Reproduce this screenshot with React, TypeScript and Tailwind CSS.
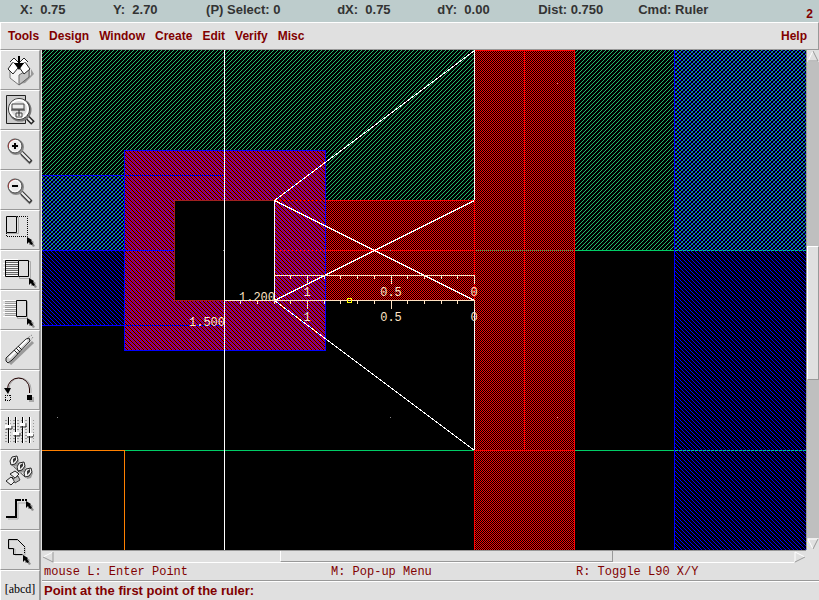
import type { ReactNode } from "react";

const readouts = ["X:  0.75", "Y:  2.70", "(P) Select: 0", "dX:  0.75", "dY:  0.00", "Dist: 0.750", "Cmd: Ruler"];

const menus = ["Tools", "Design", "Window", "Create", "Edit", "Verify", "Misc"];

const Pointer = ({ x, y }: { x: number; y: number }) => (
  <g transform={`translate(${x} ${y})`}>
    <path d="M1 1l5 3-1 1 2 3-2 1-2-3-2 1z" fill="#8c8c8c" transform="translate(1 1)" />
    <path d="M0 0l5 3-1 1 2 3-2 1-2-3-2 2z" fill="#000" />
  </g>
);

const Magnifier = ({ plus }: { plus?: boolean }) => (
  <>
    <path d="M22 24l9 9" stroke="#8c8c8c" strokeWidth="4" />
    <path d="M20 21l11 11" stroke="#333" strokeWidth="4" />
    <path d="M20 21l10 10" stroke="#eee" strokeWidth="2" />
    <circle cx="16" cy="17" r="7" fill="none" stroke="#8c8c8c" strokeWidth="2" />
    <circle cx="15" cy="16" r="7" fill="#e8e8e8" stroke="#444" />
    <path d="M9 18a6 6 0 0 1 6-8" fill="none" stroke="#a33" />
    <circle cx="15" cy="16" r="5.5" fill="none" stroke="#fff" />
    <path d={plus ? "M12 16h6M15 13v6" : "M12 16h6"} stroke="#000" strokeWidth="2" />
  </>
);

const Node = ({ x, y }: { x: number; y: number }) => (
  <g transform={`translate(${x} ${y})`}>
    <path d="M-3 1l5-4 3 3-2 5-4 1z" fill="#999" />
    <path d="M-4 0l2-4 5-1 1 4-3 4-4 1z" fill="#f4f4f4" stroke="#222" />
    <path d="M-1 2v-4l3-2v3z" fill="#333" />
  </g>
);

const tools: { label: string; icon: ReactNode }[] = [
  {
    label: "Save",
    icon: (
      <>
        <path d="M20 34l11-9v-6l3 5-9 9z" fill="#999" />
        <path d="M10 19l9-6 10 6v8l-10 8-9-7z" fill="#f2f2f2" stroke="#777" />
        <path d="M19 25l10-6v8l-10 8z" fill="#c4c4c4" stroke="#666" />
        <path d="M8 19l5-7 6 5-1 1-5 6z" fill="#fff" stroke="#222" />
        <path d="M19 17l6-5 5 7-6 5z" fill="#fff" stroke="#222" />
        <path d="M10 12l4-4 5 5M28 12l-4-4-5 5" fill="#fff" stroke="#222" />
        <path d="M19 6v11" stroke="#000" strokeWidth="2" />
        <path d="M14 13h10l-5 7z" fill="#000" />
      </>
    ),
  },
  {
    label: "Fit",
    icon: (
      <>
        <path d="M6.500 5.500h19v28h-19z" fill="#ccc" stroke="#222" />
        <path d="M25 25l8 8" stroke="#222" strokeWidth="5" />
        <path d="M25 25l7 7" stroke="#eee" strokeWidth="2" />
        <circle cx="20" cy="20" r="10.5" fill="none" stroke="#777" strokeWidth="2" />
        <circle cx="19" cy="19" r="10.5" fill="#ddd" stroke="#333" />
        <circle cx="19" cy="19" r="9" fill="none" stroke="#fff" strokeWidth="2" />
        <path d="M12 14h12v5H12zM16 23h6v4h-6z" fill="#eee" stroke="#444" />
        <path d="M11 20h14M19 20v6" stroke="#222" />
      </>
    ),
  },
  { label: "Zoom in", icon: <Magnifier plus /> },
  { label: "Zoom out", icon: <Magnifier /> },
  {
    label: "Stretch",
    icon: (
      <>
        <path d="M7.500 7.500h11v16h-11z" fill="none" stroke="#aaa" />
        <path d="M6.500 6.500h10v16h-10z" fill="#ddd" stroke="#000" />
        <path d="M17 6.500h10.500v20h-21v-4" fill="none" stroke="#000" strokeDasharray="1 1" />
        <Pointer x={27} y={27} />
      </>
    ),
  },
  {
    label: "Copy",
    icon: (
      <>
        <path d="M3 9.500h15M3 13.500h15M3 17.500h15M3 21.500h15M3 25.500h15" stroke="#fff" />
        <path d="M6 12.500h12M6 14.500h12M6 16.500h12M6 18.500h12M6 20.500h12M6 22.500h12M6 24.500h12" stroke="#666" />
        <path d="M18 10.500H5.500v16H18" fill="none" stroke="#000" />
        <path d="M19.500 11.500h11v17h-11z" fill="none" stroke="#aaa" />
        <path d="M18.500 10.500h10v16h-10z" fill="#ddd" stroke="#000" />
        <Pointer x={29} y={28} />
      </>
    ),
  },
  {
    label: "Move",
    icon: (
      <>
        <path d="M3 10.500h14M3 14.500h14M3 18.500h14M3 22.500h14M3 26.500h14" stroke="#fff" />
        <path d="M5 11.500h12M5 13.500h12M5 15.500h12M5 17.500h12M5 19.500h12M5 21.500h12M5 23.500h12M5 25.500h12" stroke="#999" />
        <path d="M17.500 11.500h10v17h-10z" fill="none" stroke="#aaa" />
        <path d="M16.500 10.500h10v16h-10z" fill="#ddd" stroke="#000" />
        <Pointer x={27} y={28} />
      </>
    ),
  },
  {
    label: "Delete",
    icon: (
      <>
        <path d="M10 34L33 12" stroke="#999" strokeWidth="3" />
        <path d="M6 28L26 9l3-1 1 3-18 19-4 3-2-2z" fill="#ccc" stroke="#222" />
        <path d="M9 28L27 10" stroke="#fff" strokeWidth="2" />
        <path d="M14 20l4 4M16 18l4 4M18 16l4 4" stroke="#222" />
        <path d="M26 9l6-4M30 11l3-4" stroke="#777" strokeDasharray="1 1" />
      </>
    ),
  },
  {
    label: "Undo",
    icon: (
      <>
        <path d="M9 19A11 11 0 0 1 31 19v4" fill="none" stroke="#aaa" />
        <path d="M7.500 19A11 11 0 0 1 29.500 19v4" fill="none" stroke="#200" />
        <path d="M4 18h7l-3 6z" fill="#000" />
        <path d="M5 25.500h6M5 30.500h6M5.500 25v6M10.500 25v6" fill="none" stroke="#000" strokeDasharray="1 1" />
        <path d="M29 27h5v5h-5z" fill="#aaa" />
        <path d="M27 25h5v5h-5z" fill="#000" />
      </>
    ),
  },
  {
    label: "Properties",
    icon: (
      <>
        <path d="M5 10.500h29M5 13.500h29M5 16.500h29M5 19.500h29M5 22.500h29M5 25.500h29M5 28.500h29M5 31.500h29" stroke="#999" strokeDasharray="2 2" />
        <path d="M8.500 7v26M15.500 7v26M22.500 7v26M29.500 7v26" stroke="#000" />
        <path d="M9.500 7v26M16.500 7v26M23.500 7v26M30.500 7v26" stroke="#fff" />
        <path d="M6 19h6v-3M14 26h6v-3M20 17h6v-3M27 27h6v-3" stroke="#333" />
        <path d="M5 15h6v3H5zM13 22h6v3h-6zM20 13h5v3h-5zM27 23h6v3h-6z" fill="#fff" />
      </>
    ),
  },
  {
    label: "Instance",
    icon: (
      <>
        <path d="M11 14l14 13M22 18L11 29" stroke="#444" />
        <Node x={14} y={11} />
        <Node x={21} y={17} />
        <Node x={28} y={23} />
        <path d="M10 24l5-3 4 3-4 4z" fill="#eee" stroke="#222" />
        <path d="M6 31l5-4 4 4-4 4z" fill="#eee" stroke="#222" />
        <path d="M13 29l5-3 2 4-5 3z" fill="#bbb" stroke="#444" />
      </>
    ),
  },
  {
    label: "Path",
    icon: (
      <>
        <path d="M8 29h10V13h8" fill="none" stroke="#aaa" />
        <path d="M6 27h10V10h3" fill="none" stroke="#000" strokeWidth="2" />
        <path d="M19 10h8" stroke="#000" strokeWidth="2" strokeDasharray="2 1" />
        <Pointer x={26} y={11} />
      </>
    ),
  },
  {
    label: "Polygon",
    icon: (
      <>
        <path d="M9 10h9l7 7v8H15v-6H9z" fill="#ddd" stroke="#aaa" />
        <path d="M24.500 16.500l-7-7h-9v9h5v6h9" fill="none" stroke="#000" />
        <path d="M24.500 16v8" stroke="#000" strokeDasharray="1 1" />
        <Pointer x={23} y={25} />
      </>
    ),
  },
];

const Ruler = ({ from, y }: { from: number; y: number }) => {
  const ticks = [];
  for (let i = 0; 474 - i * 16.7 > from; i++) ticks.push(i);
  return (
    <g fill="#ffe4c4">
      <rect x={from} y={y} width={475 - from} height="1" />
      {ticks.map((i) => (
        <rect key={i} x={Math.round(474 - i * 16.7)} y={y} width="1" height={i % 5 ? 4 : 9} />
      ))}
      <g className="font-['Liberation_Mono',monospace] text-[12px] font-normal" textAnchor="middle">
        <text x="307" y={y + 21}>1</text>
        <text x="391" y={y + 21}>0.5</text>
        <text x="474" y={y + 21}>0</text>
      </g>
    </g>
  );
};

const LayoutCanvas = () => (
  <svg className="block h-full w-full bg-black" shapeRendering="crispEdges" role="img" aria-label="Cell layout">
    <defs>
      <pattern id="green" width="4" height="4" patternUnits="userSpaceOnUse">
        <path d="M3 0h1v1h-1zM2 1h1v1h-1zM1 2h1v1h-1zM0 3h1v1h-1z" fill="#23b96c" />
      </pattern>
      <pattern id="blue" width="4" height="4" patternUnits="userSpaceOnUse">
        <path d="M0 0h1v1h-1zM1 1h1v1h-1zM2 2h1v1h-1zM3 3h1v1h-1z" fill="#00f" />
      </pattern>
      <pattern id="red" width="2" height="2" patternUnits="userSpaceOnUse">
        <path d="M1 0h1v1h-1zM0 1h1v1h-1z" fill="#f00" />
      </pattern>
    </defs>
    <g transform="translate(-42 -50)">
      <rect x="42" y="50" width="764" height="200" fill="url(#green)" />
      <rect x="42" y="175" width="82" height="150" fill="url(#blue)" />
      <rect x="674" y="50" width="2000" height="2000" fill="url(#blue)" />
      <path d="M674 50h1v2000h-1z" fill="#00f" />

      <path d="M274 200h200v100H274zM474 50h101v2000H474zM124 150h202v201H124z" fill="#000" />
      <path d="M124 150h202v201H124z" fill="url(#blue)" />
      <path d="M124 150h202v201H124z" fill="url(#red)" />
      <path d="M326 200h148v100H326zM474 50h101v2000H474z" fill="url(#red)" />
      <path d="M42 175h82v1H42zM42 250h132v1H42zM42 325h82v1H42z" fill="#00f" />
      <path d="M124 175.500h100M124 325.500h100" stroke="#00f" strokeDasharray="1 1" />
      <path d="M124.500 150.500h201v200h-201z" fill="none" stroke="#00f" />
      <path d="M174.500 200.500h100v100h-100z" fill="#000" stroke="#a02020" />

      <path d="M275 200.500h50M275 250.500h50" stroke="#f00" strokeDasharray="2 2" />
      <path d="M326 200h148v1H326zM326 250h148v1H326zM474 50h101v1H474zM474 450h101v1H474z" fill="#f00" />
      <path d="M474 50h1v2000h-1zM524 50h1v400h-1zM574 50h1v2000h-1z" fill="#f00" />
      <path d="M476 250.500h98" stroke="#0c6" strokeDasharray="1 1" />
      <path d="M575 250h99v1h-99zM125 450h349v1H125zM575 450h99v1h-99z" fill="#0c6" />
      <path d="M675 250.500h2000M675 450.500h2000" stroke="#00f" />
      <path d="M675 250.500h2000M675 450.500h2000" stroke="#0c8" strokeDasharray="3 1" />
      <path d="M42 450h83v1H42zM124 450h1v2000h-1z" fill="#ff8000" />

      <path d="M57 417h1v1h-1zM390 417h1v1h-1zM557 417h1v1h-1zM390 250h1v1h-1zM557 83h1v1h-1zM223 250h1v1h-1z" fill="#888" />
      <path d="M224 50h1v2000h-1zM274 200h1v100h-1zM474 50h1v150h-1zM474 300h1v150h-1z" fill="#fff" />
      <path d="M474.500 50.500l-200 150 200 100M474.500 200.500l-200 100 200 150" fill="none" stroke="#fff" />

      <Ruler from={274} y={275} />
      <Ruler from={224} y={300} />
      <g className="font-['Liberation_Mono',monospace] text-[12px] font-normal" fill="#ffe4c4" textAnchor="end">
        <text x="275" y="301">1.200</text>
        <text x="225" y="326">1.500</text>
      </g>
      <path d="M347.500 298.500h4v4h-4z" fill="none" stroke="#ff0" />
    </g>
  </svg>
);

const arrows: Record<string, [string, string]> = {
  up: ["M1 11L6 1", "M6 1l5 10H1"],
  down: ["M11 1H1l5 10", "M6 11l5-10"],
  left: ["M1 6l10-5", "M1 6l10 5V1"],
  right: ["M11 6L1 1v10", "M1 11l10-5"],
};

const ScrollArrow = ({ to }: { to: string }) => (
  <button type="button" aria-label={`Scroll ${to}`} className="h-3 w-3 shrink-0 bg-[#e0e0e0]">
    <svg viewBox="0 0 12 12" className="block h-3 w-3" fill="none">
      <path d={arrows[to][0]} stroke="#fff" />
      <path d={arrows[to][1]} stroke="#999" />
    </svg>
  </button>
);

export default function App() {
  return (
    <div className="flex h-screen flex-col overflow-hidden bg-[#e0e0e0] font-['Liberation_Sans',Arial,sans-serif] text-[12px] font-bold text-[#800000]">
      <header className="flex h-[22px] shrink-0 bg-[#bdcccc] pl-5 pr-1.5">
        <div className="grid flex-1 grid-cols-[93fr_93fr_131fr_100fr_101fr_100fr_168fr] whitespace-pre text-[13px] leading-5 text-[#333]">
          {readouts.map((text) => (
            <span key={text}>{text}</span>
          ))}
        </div>
        <span className="self-end leading-4">2</span>
      </header>

      <nav className="flex h-7 shrink-0 items-center gap-2.5 border-b border-l border-r border-t border-b-[#999] border-l-white border-r-[#999] border-t-white px-[7px]">
        {menus.map((name) => (
          <button key={name} type="button">
            {name}
          </button>
        ))}
        <button type="button" className="ml-auto mr-1">
          Help
        </button>
      </nav>

      <div className="flex min-h-0 flex-1">
        <aside className="w-[41px] shrink-0 overflow-hidden border-r border-[#999]">
          {tools.map(({ label, icon }) => (
            <button
              key={label}
              type="button"
              aria-label={label}
              className="block h-10 w-10 border-b border-l border-r border-t border-b-[#999] border-l-white border-r-[#999] border-t-white"
            >
              <svg viewBox="1 1 38 38" className="block h-[38px] w-[38px]" fill="none">
                {icon}
              </svg>
            </button>
          ))}
          <button
            type="button"
            className="block h-10 w-10 border-l border-r border-t border-l-white border-r-[#999] border-t-white pb-1 font-['Liberation_Serif',serif] text-[12px] font-normal text-black"
          >
            [abcd]
          </button>
        </aside>

        <main className="flex min-w-0 flex-1 flex-col pl-px">
          <div className="flex min-h-0 flex-1">
            <div className="min-w-0 flex-1">
              <LayoutCanvas />
            </div>
            <div className="flex w-[13px] shrink-0 flex-col border-l border-[#999] bg-[#bfbfbf]">
              <ScrollArrow to="up" />
              <div className="flex flex-1 flex-col">
                <div className="grow-185" />
                <div className="grow-132 border border-b-[#999] border-l-white border-r-[#999] border-t-white bg-[#e0e0e0]" />
                <div className="grow-159" />
              </div>
              <ScrollArrow to="down" />
            </div>
          </div>
          <div className="mr-[13px] flex h-[13px] shrink-0 border-b border-t border-b-white border-t-[#999]">
            <ScrollArrow to="left" />
            <div className="flex flex-1">
              <div className="grow-227" />
              <div className="grow-331 border-b border-l border-r border-b-[#999] border-l-white border-r-[#999]" />
              <div className="grow-182" />
            </div>
            <ScrollArrow to="right" />
          </div>
          <div className="grid h-[18px] shrink-0 grid-cols-[287fr_245fr_243fr] border-b border-[#999] pl-0.5 font-['Liberation_Mono',monospace] font-normal leading-[18px]">
            <span>mouse L: Enter Point</span>
            <span>M: Pop-up Menu</span>
            <span>R: Toggle L90 X/Y</span>
          </div>
          <p className="h-[19px] shrink-0 border-t border-white pl-0.5 text-[13px] leading-[18px]">Point at the first point of the ruler:</p>
        </main>
      </div>
    </div>
  );
}
